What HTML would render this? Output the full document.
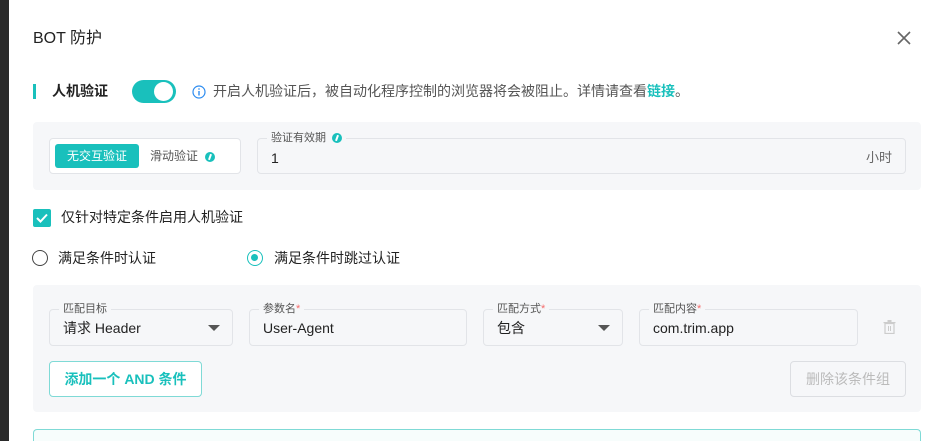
<!DOCTYPE html>
<html><head><meta charset="utf-8"><style>
*{box-sizing:border-box;margin:0;padding:0}
html,body{width:936px;height:441px;overflow:hidden}
body{background:#fff;font-family:"Liberation Sans","Noto Sans CJK SC",sans-serif;color:#222;position:relative;font-size:13px}
.a{position:absolute}
.strip{left:0;top:0;width:9px;height:441px;background:#2a2a2a}
.panel{background:#f6f7f9;border-radius:4px}
.fld{border:1px solid #e2e4e8;border-radius:4px;background:#f6f7f9}
.lbl{font-size:11px;color:#555;background:#f6f7f9;padding:0 4px;top:-9px;left:9px;line-height:16px;white-space:nowrap}
.req{color:#f56c6c}
.val{font-size:14px;color:#222;line-height:34px;left:13px;top:0}
.caret{width:0;height:0;border-left:6px solid transparent;border-right:6px solid transparent;border-top:6px solid #555}
.ic{display:inline-block;width:10px;height:10px;border-radius:50%;background:#19c0bc;vertical-align:middle;position:relative}
.ic::after{content:"";position:absolute;left:4px;top:2px;width:2px;height:6px;background:#fff;transform:rotate(20deg)}
</style></head><body>
<div class="a strip"></div>
<div class="a" style="left:33px;top:29px;font-size:16px;color:#222;line-height:20px">BOT 防护</div>
<svg class="a" style="left:897px;top:31px" width="14" height="14" viewBox="0 0 14 14"><path d="M1 1L13 13M13 1L1 13" stroke="#666" stroke-width="1.6"/></svg>

<div class="a" style="left:33px;top:84px;width:3px;height:15px;background:#19c0bc"></div>
<div class="a" style="left:52px;top:82px;font-size:14px;font-weight:bold;line-height:18px">人机验证</div>
<div class="a" style="left:132px;top:80px;width:44px;height:23px;border-radius:12px;background:#19c0bc"><div class="a" style="left:22px;top:2px;width:19px;height:19px;border-radius:50%;background:#fff"></div></div>
<svg class="a" style="left:192px;top:85px" width="14" height="14" viewBox="0 0 14 14"><circle cx="7" cy="7" r="6" fill="none" stroke="#2d8cf0" stroke-width="1.2"/><rect x="6.3" y="6" width="1.4" height="4.5" fill="#2d8cf0"/><rect x="6.3" y="3.3" width="1.4" height="1.4" fill="#2d8cf0"/></svg>
<div class="a" style="left:213px;top:82px;font-size:14px;color:#555;line-height:18px;white-space:nowrap">开启人机验证后，被自动化程序控制的浏览器将会被阻止。详情请查看<span style="color:#19c0bc;font-weight:bold">链接</span>。</div>

<div class="a panel" style="left:33px;top:122px;width:888px;height:68px"></div>
<div class="a" style="left:49px;top:138px;width:192px;height:36px;border:1px solid #e2e4e8;border-radius:4px;background:#fff"></div>
<div class="a" style="left:55px;top:144px;width:84px;height:24px;border-radius:3px;background:#19c0bc;color:#fff;font-size:12px;line-height:24px;text-align:center">无交互验证</div>
<div class="a" style="left:150px;top:148px;font-size:12px;color:#555;line-height:16px">滑动验证 <span class="ic" style="margin-left:4px"></span></div>
<div class="a fld" style="left:257px;top:138px;width:649px;height:36px">
<div class="a lbl">验证有效期 <span class="ic" style="margin-left:3px"></span></div>
<div class="a val" style="top:2px">1</div>
<div class="a" style="right:13px;top:2px;line-height:34px;color:#666;font-size:13px">小时</div>
</div>

<div class="a" style="left:33px;top:209px;width:18px;height:18px;border-radius:2px;background:#19c0bc"><svg width="18" height="18"><path d="M4 9l3.5 3.5L14 5.5" stroke="#fff" stroke-width="2" fill="none"/></svg></div>
<div class="a" style="left:61px;top:208px;font-size:14px;line-height:19px">仅针对特定条件启用人机验证</div>

<div class="a" style="left:32px;top:250px;width:16px;height:16px;border:1.5px solid #444;border-radius:50%"></div>
<div class="a" style="left:58px;top:249px;font-size:14px;line-height:18px">满足条件时认证</div>
<div class="a" style="left:247px;top:250px;width:16px;height:16px;border:1.5px solid #19c0bc;border-radius:50%"><div class="a" style="left:3px;top:3px;width:7px;height:7px;border-radius:50%;background:#19c0bc"></div></div>
<div class="a" style="left:274px;top:249px;font-size:14px;line-height:18px">满足条件时跳过认证</div>

<div class="a panel" style="left:33px;top:285px;width:888px;height:127px"></div>
<div class="a fld" style="left:49px;top:309px;width:184px;height:37px"><div class="a lbl">匹配目标</div><div class="a val" style="top:1px">请求 Header</div><div class="a caret" style="right:12px;top:15px"></div></div>
<div class="a fld" style="left:249px;top:309px;width:218px;height:37px"><div class="a lbl">参数名<span class="req">*</span></div><div class="a val" style="top:1px">User-Agent</div></div>
<div class="a fld" style="left:483px;top:309px;width:140px;height:37px"><div class="a lbl">匹配方式<span class="req">*</span></div><div class="a val" style="top:1px">包含</div><div class="a caret" style="right:12px;top:15px"></div></div>
<div class="a fld" style="left:639px;top:309px;width:219px;height:37px"><div class="a lbl">匹配内容<span class="req">*</span></div><div class="a val" style="top:1px">com.trim.app</div></div>
<svg class="a" style="left:883px;top:320px" width="13" height="14" viewBox="0 0 13 14"><rect x="0.5" y="2" width="12" height="1.2" fill="#ccc"/><rect x="4.5" y="0" width="4" height="2" fill="#ccc"/><rect x="2" y="3.5" width="9" height="10" fill="none" stroke="#ccc" stroke-width="1.2"/><rect x="5" y="6" width="1" height="5" fill="#ccc"/><rect x="7" y="6" width="1" height="5" fill="#ccc"/></svg>
<div class="a" style="left:49px;top:361px;width:153px;height:36px;border:1px solid #7fdad6;border-radius:4px;background:#fff;color:#19c0bc;font-size:14px;font-weight:bold;line-height:34px;text-align:center">添加一个 AND 条件</div>
<div class="a" style="left:790px;top:361px;width:116px;height:36px;border:1px solid #dcdee2;border-radius:4px;background:#f6f7f9;color:#bbb;font-size:14px;line-height:34px;text-align:center">删除该条件组</div>

<div class="a" style="left:33px;top:429px;width:888px;height:12px;border:1px solid #7fdad6;border-bottom:none;border-radius:4px 4px 0 0;background:#f7fdfc"></div>
</body></html>
